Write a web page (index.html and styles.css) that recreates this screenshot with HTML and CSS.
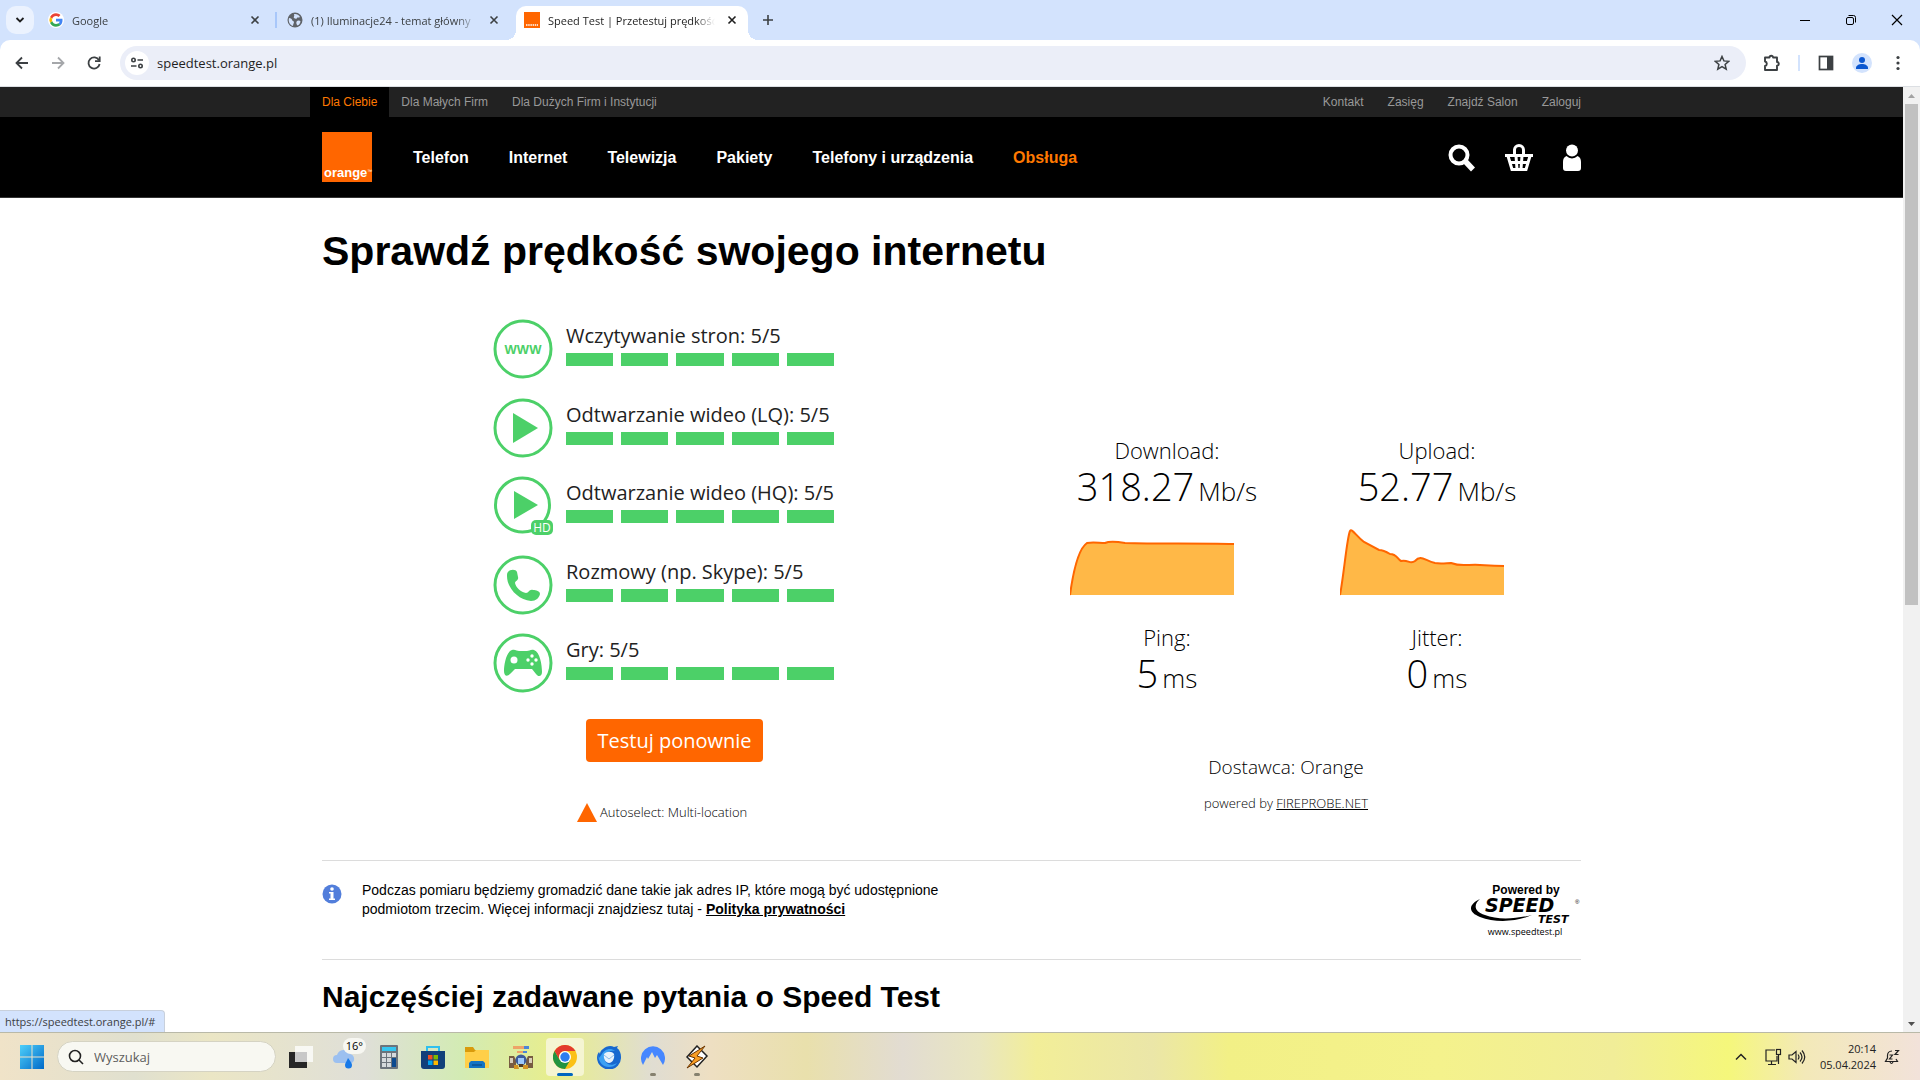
FILE: index.html
```html
<!DOCTYPE html>
<html lang="pl">
<head>
<meta charset="utf-8">
<title>Speed Test | Przetestuj prędkość</title>
<link rel="stylesheet" href="styles.css">
</head>
<body>
<header class="browser">
  <div class="tabstrip">
    <button class="tab-search" aria-label="Szukaj kart"><svg width="10" height="10" viewBox="0 0 10 10"><path d="M1.500 3l3.500 3.500L8.500 3" fill="none" stroke="#1f1f1f" stroke-width="1.800"/></svg></button>
    <div class="tab">
      <svg width="16" height="16" viewBox="0 0 48 48"><circle cx="24" cy="24" r="24" fill="#fff"/><path fill="#EA4335" d="M24 12c3 0 5.600 1 7.700 3l5.700-5.700C33.900 6.100 29.300 4 24 4 16.200 4 9.400 8.500 6.200 15l6.600 5.100C14.400 15.400 18.800 12 24 12z"/><path fill="#4285F4" d="M43.500 24.500c0-1.600-.1-3.100-.4-4.500H24v8.500h11c-.5 2.500-1.900 4.700-4 6.200l6.500 5c3.800-3.600 6-8.800 6-15.200z"/><path fill="#FBBC05" d="M12.800 28A12 12 0 0 1 12.800 20.100L6.200 15a20 20 0 0 0 0 18z"/><path fill="#34A853" d="M24 44c5.400 0 10-1.800 13.400-4.900l-6.500-5c-1.800 1.200-4.100 2-6.900 2-5.200 0-9.600-3.500-11.200-8.200L6.200 33C9.400 39.500 16.200 44 24 44z"/></svg>
      <span class="tab-title">Google</span>
      <button class="tab-close" aria-label="Zamknij"><svg width="10" height="10" viewBox="0 0 10 10"><path d="M1.500 1.500l7 7m0-7l-7 7" stroke="#3c4043" stroke-width="1.600"/></svg></button>
    </div>
    <div class="tab tab-divided">
      <svg width="16" height="16" viewBox="0 0 16 16"><circle cx="8" cy="8" r="7.500" fill="#5f6368"/><path d="M2 6c2 0 3 1 3 2s2 1 2 2-1 2-1 4c-3-1-5-4-4-8zM7 2c2-.5 5 .5 6 3-1 1-3 0-3 1s-2 1-3 0 1-2 0-4zM10 9c1-1 3-.5 3.500.5C13 12 12 13 10.500 13.500 9 12 9 10 10 9z" fill="#d3e3fd"/></svg>
      <span class="tab-title">(1) Iluminacje24 - temat główny</span>
      <button class="tab-close" aria-label="Zamknij"><svg width="10" height="10" viewBox="0 0 10 10"><path d="M1.500 1.500l7 7m0-7l-7 7" stroke="#3c4043" stroke-width="1.600"/></svg></button>
    </div>
    <div class="tab tab-active">
      <svg width="16" height="16" viewBox="0 0 16 16"><path fill="#f60" d="M0 0h16v16H0z"/><path d="M2 13h12" stroke="#fff" stroke-width="1.500" stroke-dasharray="1.500 .7"/></svg>
      <span class="tab-title">Speed Test | Przetestuj prędkość</span>
      <button class="tab-close" aria-label="Zamknij"><svg width="10" height="10" viewBox="0 0 10 10"><path d="M1.500 1.500l7 7m0-7l-7 7" stroke="#1f1f1f" stroke-width="1.600"/></svg></button>
    </div>
    <button class="new-tab" aria-label="Nowa karta"><svg width="12" height="12" viewBox="0 0 12 12"><path d="M6 1v10M1 6h10" stroke="#3c4043" stroke-width="1.600"/></svg></button>
    <div class="window-buttons">
      <button aria-label="Minimalizuj"><svg width="12" height="12" viewBox="0 0 12 12"><path d="M1 6.500h10" stroke="#000"/></svg></button>
      <button aria-label="Przywróć"><svg width="12" height="12" viewBox="0 0 12 12" fill="none" stroke="#000"><rect x="1.500" y="3.500" width="7" height="7" rx="1.500"/><path d="M3.500 1.500h5a2 2 0 0 1 2 2v5"/></svg></button>
      <button aria-label="Zamknij okno"><svg width="12" height="12" viewBox="0 0 12 12"><path d="M1 1l10 10M11 1L1 11" stroke="#000" stroke-width="1.200"/></svg></button>
    </div>
  </div>
  <div class="toolbar">
    <button aria-label="Wstecz"><svg width="16" height="16" viewBox="0 0 16 16" fill="none" stroke="#3c4043" stroke-width="1.800"><path d="M14 8H3M8 2.500L2.500 8 8 13.500"/></svg></button>
    <button aria-label="Dalej"><svg width="16" height="16" viewBox="0 0 16 16" fill="none" stroke="#a5a7aa" stroke-width="1.800"><path d="M2 8h11M8 2.500L13.500 8 8 13.500"/></svg></button>
    <button aria-label="Odśwież"><svg width="16" height="16" viewBox="0 0 16 16" fill="none" stroke="#3c4043" stroke-width="1.800"><path d="M13 5.200A5.600 5.600 0 1 0 13.600 9"/><path d="M13.700 1.500v4.700H9"/></svg></button>
    <div class="omnibox">
      <span class="site-info"><svg width="14" height="14" viewBox="0 0 14 14" fill="none" stroke="#3c4043" stroke-width="1.600"><circle cx="3.500" cy="4" r="1.700"/><path d="M7.500 4H13M1 10h5.500"/><circle cx="10.500" cy="10" r="1.700"/></svg></span>
      <input class="address" type="text" value="speedtest.orange.pl" aria-label="Adres">
      <svg width="16" height="16" viewBox="0 0 16 16"><path d="M8 1.500l1.900 4.400 4.800.4-3.600 3.200 1.100 4.700L8 11.700l-4.200 2.500 1.100-4.700L1.300 6.300l4.800-.4z" fill="none" stroke="#3c4043" stroke-width="1.500"/></svg>
    </div>
    <div class="toolbar-end">
      <button aria-label="Rozszerzenia"><svg width="18" height="18" viewBox="0 0 18 18"><path d="M3 3.500h4.500a1.800 1.800 0 0 1 3.600 0H15V8a1.800 1.800 0 0 1 0 3.600V16H3v-4a2.300 2.300 0 0 0 0-4.500z" fill="none" stroke="#3c4043" stroke-width="1.900" stroke-linejoin="round"/></svg></button>
      <span class="toolbar-rule"></span>
      <button aria-label="Panel boczny"><svg width="16" height="16" viewBox="0 0 16 16"><rect x="1.500" y="1.500" width="13" height="13" fill="none" stroke="#3c4043" stroke-width="1.700"/><path d="M9 1h6v14H9z" fill="#3c4043"/></svg></button>
      <button aria-label="Profil"><svg width="20" height="20" viewBox="0 0 20 20"><circle cx="10" cy="10" r="10" fill="#d3e3fd"/><circle cx="10" cy="7" r="3" fill="#0b57d0"/><path d="M4 16v-1c0-2.500 3-4 6-4s6 1.500 6 4v1z" fill="#0b57d0"/></svg></button>
      <button class="menu" aria-label="Menu"><svg width="4" height="16" viewBox="0 0 4 16" fill="#3c4043"><circle cx="2" cy="2.500" r="1.600"/><circle cx="2" cy="8" r="1.600"/><circle cx="2" cy="13.500" r="1.600"/></svg></button>
    </div>
  </div>
</header>

<div class="viewport">
  <div class="page">
    <div class="topbar">
      <div class="container topbar-inner">
        <nav class="segments"><a class="current" href="#">Dla Ciebie</a><a href="#">Dla Małych Firm</a><a href="#">Dla Dużych Firm i Instytucji</a></nav>
        <nav class="service"><a href="#">Kontakt</a><a href="#">Zasięg</a><a href="#">Znajdź Salon</a><a href="#">Zaloguj</a></nav>
      </div>
    </div>
    <div class="masthead">
      <div class="container masthead-inner">
        <a class="logo" href="#">orange<sup>™</sup></a>
        <nav class="main-nav"><a href="#">Telefon</a><a href="#">Internet</a><a href="#">Telewizja</a><a href="#">Pakiety</a><a href="#">Telefony i urządzenia</a><a class="current" href="#">Obsługa</a></nav>
        <div class="tools">
          <a href="#" aria-label="Szukaj"><svg width="28" height="28" viewBox="0 0 28 28" fill="none" stroke="#fff"><circle cx="12" cy="11" r="8.500" stroke-width="4"/><path d="M18 17l8 8.500" stroke-width="5.500"/></svg></a>
          <a href="#" aria-label="Koszyk"><svg width="30" height="28" viewBox="0 0 30 28"><path fill="none" stroke="#fff" stroke-width="3" d="M10.500 12V6a4.500 4.500 0 0 1 9 0v6M1 11.500h28M4 12l4 13.500h14L26 12M6 18.500h18M12 12l1 13M18 12l-1 13"/></svg></a>
          <a href="#" aria-label="Konto"><svg width="18" height="28" viewBox="0 0 18 28" fill="#fff"><circle cx="9" cy="6.500" r="6"/><path d="M3.500 12a7.500 7.500 0 0 0 11 0c2.500 1 3.500 3 3.500 6v6c0 2-1 3-3 3H3c-2 0-3-1-3-3v-6c0-3 1-5 3.500-6z"/></svg></a>
        </div>
      </div>
    </div>

    <main class="container">
      <h1>Sprawdź prędkość swojego internetu</h1>
      <div class="results">
        <section class="quality">
          <ul class="scores">
            <li>
              <svg width="60" height="60" viewBox="0 0 60 60"><circle cx="30" cy="30" r="28" fill="none" stroke="#4cd068" stroke-width="3"/><text class="www" x="30" y="35" text-anchor="middle">WWW</text></svg>
              <div class="score"><span>Wczytywanie stron: 5/5</span><div class="bars"><i></i><i></i><i></i><i></i><i></i></div></div>
            </li>
            <li>
              <svg width="60" height="60" viewBox="0 0 60 60"><circle cx="30" cy="30" r="28" fill="none" stroke="#4cd068" stroke-width="3"/><path d="M20 15v30l25-15z" fill="#4cd068"/></svg>
              <div class="score"><span>Odtwarzanie wideo (LQ): 5/5</span><div class="bars"><i></i><i></i><i></i><i></i><i></i></div></div>
            </li>
            <li>
              <svg width="60" height="60" viewBox="0 0 60 60"><circle cx="29.500" cy="29" r="27" fill="none" stroke="#4cd068" stroke-width="3"/><path d="M21 15v28l24-14z" fill="#4cd068"/><rect x="38" y="44" width="22" height="15" rx="5" fill="#4cd068"/><text class="hd" x="49" y="56" text-anchor="middle">HD</text></svg>
              <div class="score"><span>Odtwarzanie wideo (HQ): 5/5</span><div class="bars"><i></i><i></i><i></i><i></i><i></i></div></div>
            </li>
            <li>
              <svg width="60" height="60" viewBox="0 0 60 60"><circle cx="30" cy="30" r="28" fill="none" stroke="#4cd068" stroke-width="3"/><path d="M15 17c2-3 8-3 9 0l1 5c1 3-3 4-3 6 1 5 6 9 11 10 3 0 3-4 7-3 3 0 7 1 7 4-1 4-4 7-9 7-13-1-24-13-24-25 0-2 0-3 1-4z" fill="#4cd068"/></svg>
              <div class="score"><span>Rozmowy (np. Skype): 5/5</span><div class="bars"><i></i><i></i><i></i><i></i><i></i></div></div>
            </li>
            <li>
              <svg width="60" height="60" viewBox="0 0 60 60"><circle cx="30" cy="30" r="28" fill="none" stroke="#4cd068" stroke-width="3"/><path d="M19 17c3-1 5 1 7 1h8c2 0 4-2 7-1 6 2 8 15 8 22 0 5-4 5-6 2l-4-5H22l-5 5c-3 3-6 2-6-3 0-6 2-19 8-21z" fill="#4cd068"/><g fill="#fff"><circle cx="21" cy="27" r="3.500"/><circle cx="39" cy="23" r="1.700"/><circle cx="39" cy="31" r="1.700"/><circle cx="35" cy="27" r="1.700"/><circle cx="43" cy="27" r="1.700"/></g></svg>
              <div class="score"><span>Gry: 5/5</span><div class="bars"><i></i><i></i><i></i><i></i><i></i></div></div>
            </li>
          </ul>
          <button class="retest">Testuj ponownie</button>
          <div class="server"><svg width="20" height="19" viewBox="0 0 20 19"><path d="M10 0l10 19H0z" fill="#f60"/></svg>Autoselect: Multi-location</div>
        </section>
        <section class="speeds">
          <div class="metrics">
            <div class="metric"><span class="label">Download:</span><span class="value">318.27<small>Mb/s</small></span>
              <svg width="164" height="68" viewBox="0 0 164 68"><path d="M0 67C3 45 8 21 17 15c6-1 12 0 18 0 4-2 9-2 20 0 35 1 70 0 109 1v51H0z" fill="#ffb847"/><path d="M0 67C3 45 8 21 17 15c6-1 12 0 18 0 4-2 9-2 20 0 35 1 70 0 109 1" fill="none" stroke="#f60" stroke-width="2"/></svg></div>
            <div class="metric"><span class="label">Upload:</span><span class="value">52.77<small>Mb/s</small></span>
              <svg width="164" height="68" viewBox="0 0 164 68"><path d="M0 67C4 46 7 9 10 3c2-3 6 5 14 11l15 8c4 0 6 1 11 4 7 0 7 5 11 7 7-2 9 4 14 0 6-7 10 0 20 2 6 1 12 0 16 0 8 3 12 2 18 2 13-1 15 1 35 1v29H0z" fill="#ffb847"/><path d="M0 67C4 46 7 9 10 3c2-3 6 5 14 11l15 8c4 0 6 1 11 4 7 0 7 5 11 7 7-2 9 4 14 0 6-7 10 0 20 2 6 1 12 0 16 0 8 3 12 2 18 2 13-1 15 1 35 1" fill="none" stroke="#f60" stroke-width="2"/></svg></div>
            <div class="metric"><span class="label">Ping:</span><span class="value">5<small>ms</small></span></div>
            <div class="metric"><span class="label">Jitter:</span><span class="value">0<small>ms</small></span></div>
          </div>
          <p class="provider">Dostawca: Orange</p>
          <p class="powered">powered by <a href="#">FIREPROBE.NET</a></p>
        </section>
      </div>

      <section class="notice">
        <svg class="info" width="20" height="20" viewBox="0 0 20 20"><circle cx="10" cy="10" r="9.500" fill="#527edb"/><circle cx="10" cy="5" r="1.800" fill="#fff"/><path d="M7 8h4.500v6.500H13V16H7v-1.500h1.500v-5H7z" fill="#fff"/></svg>
        <p>Podczas pomiaru będziemy gromadzić dane takie jak adres IP, które mogą być udostępnione<br>podmiotom trzecim. Więcej informacji znajdziesz tutaj - <a href="#">Polityka prywatności</a></p>
        <svg class="speedtest" width="110" height="54" viewBox="0 0 110 54"><text class="st-by" x="55" y="9" text-anchor="middle">Powered by</text><path d="M9 14C-2 19-4 27 9 32c15 6 37 5 52-2-16 4-35 5-47 0C2 26 3 19 9 14z"/><text class="st-speed" x="14" y="27">SPEED</text><text class="st-test" x="67" y="38">TEST</text><text class="st-r" x="104" y="19">®</text><text class="st-url" x="54" y="50" text-anchor="middle">www.speedtest.pl</text></svg>
      </section>
      <h2>Najczęściej zadawane pytania o Speed Test</h2>
    </main>
  </div>
  <div class="scrollbar">
    <svg width="17" height="17" viewBox="0 0 17 17"><path d="M5 11h7L8.500 7z" fill="#a3a3a3"/></svg>
    <div class="track"><div class="thumb"></div></div>
    <svg width="17" height="17" viewBox="0 0 17 17"><path d="M5 7h7l-3.500 4z" fill="#505050"/></svg>
  </div>
  <div class="status">https://speedtest.orange.pl/#</div>
</div>

<footer class="taskbar">
  <button class="start" aria-label="Start"><svg width="24" height="24" viewBox="0 0 24 24"><defs><linearGradient id="win" x2="1" y2="1"><stop stop-color="#4fd0fa"/><stop offset="1" stop-color="#0069c8"/></linearGradient></defs><path fill="url(#win)" d="M0 0h11.500v11.500H0zM12.500 0H24v11.500H12.500zM0 12.500h11.500V24H0zM12.500 12.500H24V24H12.500z"/></svg></button>
  <label class="search"><svg width="16" height="16" viewBox="0 0 16 16" fill="none" stroke="#222" stroke-width="1.600"><circle cx="7" cy="7" r="5.500"/><path d="M11 11l4 4"/></svg><input type="text" placeholder="Wyszukaj" aria-label="Wyszukaj"></label>
  <div class="apps">
    <button aria-label="Widok zadań"><svg width="24" height="24" viewBox="0 0 24 24"><path d="M0 7h18v16H0z" fill="#262626"/><path d="M6 1h18v16H6z" fill="#fff" opacity=".75"/></svg></button>
    <button aria-label="Pogoda"><svg width="26" height="24" viewBox="0 0 26 24"><path d="M5 18a4 4 0 0 1 0-8 7 7 0 0 1 13-1 5 5 0 0 1 2 9z" fill="#9cc0f0"/><path d="M16 13c2 3 4 5 4 7a3.500 3.500 0 0 1-7 0c0-2 2-4 3-7z" fill="#1779e8"/></svg><span class="badge">16°</span></button>
    <button aria-label="Kalkulator"><svg width="18" height="24" viewBox="0 0 18 24"><rect width="18" height="24" rx="1" fill="#6b747c"/><path d="M2 2h14v4H2z" fill="#35c6f0"/><path d="M2 8h4v4H2zM7 8h4v4H7zM12 8h4v4h-4zM2 13h4v4H2zM7 13h4v4H7zM2 18h4v4H2zM7 18h4v4H7z" fill="#d5dadd"/><path d="M12 13h4v9h-4z" fill="#0b4a8f"/></svg></button>
    <button aria-label="Sklep"><svg width="24" height="24" viewBox="0 0 24 24"><path d="M6 7V2h12v5" fill="none" stroke="#2fc0ee" stroke-width="2"/><path d="M0 6h24v15a3 3 0 0 1-3 3H3a3 3 0 0 1-3-3z" fill="#11407a"/><path d="M7 10h4.500v4.500H7z" fill="#f25022"/><path d="M12.500 10H17v4.500h-4.500z" fill="#7fba00"/><path d="M7 15.500h4.500V20H7z" fill="#00a4ef"/><path d="M12.500 15.500H17V20h-4.500z" fill="#ffb900"/></svg></button>
    <button aria-label="Eksplorator plików"><svg width="24" height="24" viewBox="0 0 24 24"><path d="M0 2h8l2 3h13v6H0z" fill="#d99b0c"/><path d="M0 7h9l2-2h13v18H0z" fill="#ffcf48"/><path d="M4 23v-5l2-2h12l2 2v5z" fill="#1474c4"/><path d="M7 19h10v2H7z" fill="#0d5a9e"/></svg></button>
    <button aria-label="Gra"><svg width="24" height="24" viewBox="0 0 24 24"><path d="M4 1h11v3H4zM8 6h6v2H8z" fill="#eea468"/><path d="M15 1h5v3h-5zM14 6h4v2h-4z" fill="#4a86d8"/><path d="M0 11h5l2 4v8H0zM24 11h-5l-2 4v8h7z" fill="#775c42"/><path d="M1 13h3v5H1zM20 13h3v5h-3z" fill="#d8cfb9"/><circle cx="12" cy="15" r="5.500" fill="#3c5b9c"/><path d="M9 13h6v6H9z" fill="#9cc9fa"/><path d="M5 20h4l1 4H5zM14 20h5v4h-5z" fill="#d39322"/><path d="M10 19h4v3h-4z" fill="#523a25"/></svg></button>
    <button class="app-active" aria-label="Chrome"><svg width="24" height="24" viewBox="0 0 24 24"><circle cx="12" cy="12" r="12" fill="#fbc116"/><path d="M1.600 6A12 12 0 0 0 12 24l5.200-9H6.800z" fill="#229342"/><path d="M1.600 6A12 12 0 0 1 22.400 6H12a6 6 0 0 0-5.200 9z" fill="#e33b2e"/><circle cx="12" cy="12" r="6" fill="#fff"/><circle cx="12" cy="12" r="4.700" fill="#2d7df0"/></svg></button>
    <button aria-label="Thunderbird"><svg width="24" height="24" viewBox="0 0 24 24"><path d="M6 4c3-3 8-4 11-2l4-1-1 2c3 2 4 6 4 9a12 12 0 0 1-24 1c0-3 1-5 2-6l1 2c0-2 1-4 3-5z" fill="#1768cf"/><path d="M1 10c1 8 5 12 11 12 3 0 6-1 8-4-5 3-10 2-12-2-1-3-1-5 1-7 2-3 6-4 9-3-5-4-11-1-13 3l-3 4z" fill="#3ba1f3"/><path d="M7 9c3-3 8-3 10 0 1 5-2 9-5 9s-6-4-5-9z" fill="#e7f2fb"/><path d="M7 10l5 4 5-4" fill="none" stroke="#8dbce9"/></svg></button>
    <button class="app-running" aria-label="NordVPN"><svg width="24" height="24" viewBox="0 0 24 24"><path d="M2 20A12 12 0 1 1 22 20l-6-10-2 3-3-6-4 7-1-2z" fill="#4687ff"/></svg></button>
    <button class="app-running" aria-label="Winamp"><svg width="24" height="24" viewBox="0 0 24 24"><path d="M12 1l10 10-10 11L2 12z" fill="#fff" stroke="#222" stroke-width="1.500"/><path d="M20 1L4 11l6 2-8 10 16-10-6-2z" fill="#f99d23" stroke="#6b3500"/></svg></button>
  </div>
  <div class="tray">
    <svg width="12" height="8" viewBox="0 0 12 8"><path d="M1 6.500l5-5 5 5" fill="none" stroke="#222" stroke-width="1.500"/></svg>
    <div class="tray-pair"><svg width="18" height="18" viewBox="0 0 18 18" fill="none" stroke="#222" stroke-width="1.200"><path d="M11 2H2v11h11V8M7.500 13v3M4 16.500h8"/><rect x="12.500" y="1.500" width="4" height="5"/><path d="M14.500 6.500V16"/></svg>
    <svg width="18" height="16" viewBox="0 0 18 16" fill="none" stroke="#222" stroke-width="1.200"><path d="M1 6v4h3l4 3.500v-11L4 6zM10 5.500q2 2.500 0 5M12 3.500q4 4.500 0 9M14 1.500q5.500 6.500 0 13"/></svg></div>
    <div class="clock"><time>20:14</time><time>05.04.2024</time></div>
    <svg width="16" height="16" viewBox="0 0 16 16" fill="none" stroke="#222" stroke-width="1.200"><path d="M8 2C5 2 3.500 4 3.500 6.500V9L1.500 12.500h12L12 10M6 13q1.500 3 3 0M5.500 6h3l-3 4h3M11 1.500h3.500L11 5.500h3.500"/></svg>
  </div>
</footer>
</body>
</html>
```
FILE: styles.css
```css
* { box-sizing: border-box; }

body {
  margin: 0;
  height: 100vh;
  display: flex;
  flex-direction: column;
  overflow: hidden;
  background: #fff;
  color: #000;
  font-family: "Liberation Sans", Arial, sans-serif;
}

svg { display: block; flex: none; }
a { color: inherit; text-decoration: none; }
button {
  display: flex;
  align-items: center;
  justify-content: center;
  padding: 0;
  border: 0;
  background: none;
  font: inherit;
}
input {
  min-width: 0;
  padding: 0;
  border: 0;
  outline: 0;
  background: none;
  font: inherit;
  color: inherit;
}

/* Browser chrome */
.browser {
  flex: none;
  background: #d3e3fd;
  border-bottom: 1px solid #dcdfe3;
  font-family: "Open Sans", "Noto Sans", sans-serif;
  font-size: 11px;
  color: #3c4043;
}
.tabstrip { display: flex; height: 40px; padding: 6px 0 0 6px; }
.tab-search { width: 28px; height: 28px; border-radius: 10px; background: #ebf2fe; }
.tab {
  position: relative;
  display: flex;
  align-items: center;
  gap: 8px;
  width: 237px;
  height: 28px;
  margin-left: 4px;
  padding: 0 11px 0 10px;
}
.tab-title {
  flex: 1;
  overflow: hidden;
  white-space: nowrap;
  mask-image: linear-gradient(90deg, #000 88%, transparent);
}
.tab-close { width: 18px; height: 18px; }
.tab-divided { width: 229px; height: 16px; margin: 6px 0 0; padding-right: 1px; border-left: 2px solid #a8c7fa; }
.tab-active {
  width: 232px;
  height: 34px;
  margin-left: 12px;
  padding: 0 7px 6px 8px;
  border-radius: 10px 10px 0 0;
  background: #fff;
  color: #1f1f1f;
}
.tab-active::before, .tab-active::after {
  content: "";
  position: absolute;
  bottom: 0;
  width: 10px;
  height: 10px;
}
.tab-active::before { right: 100%; background: radial-gradient(circle at 0 0, transparent 10px, #fff 10px); }
.tab-active::after { left: 100%; background: radial-gradient(circle at 100% 0, transparent 10px, #fff 10px); }
.new-tab { width: 28px; height: 28px; margin-left: 6px; }
.window-buttons { display: flex; margin-left: auto; }
.window-buttons button { width: 46px; height: 28px; }

.toolbar {
  display: flex;
  align-items: center;
  height: 46px;
  padding: 0 20px 0 4px;
  border-radius: 10px 10px 0 0;
  background: #fff;
}
.toolbar > button { width: 36px; height: 34px; }
.omnibox {
  flex: 1;
  display: flex;
  align-items: center;
  gap: 8px;
  height: 34px;
  margin-left: 8px;
  padding: 0 16px 0 5px;
  border-radius: 17px;
  background: #ebeef8;
  color: #1f1f1f;
  font-size: 13px;
}
.site-info { display: flex; align-items: center; justify-content: center; width: 24px; height: 24px; border-radius: 50%; background: #fff; }
.address { flex: 1; }
.toolbar-end { display: flex; align-items: center; gap: 18px; margin-left: 16px; }
.toolbar-rule { width: 2px; height: 16px; background: #d3e3fd; }
.menu { margin-left: 6px; }

/* Page viewport */
.viewport { position: relative; flex: 1; min-height: 0; display: flex; overflow: hidden; }
.page { flex: 1; min-width: 0; overflow: hidden; }
.scrollbar { display: flex; flex-direction: column; width: 17px; background: #f1f1f1; }
.track { flex: 1; padding: 0 2px; }
.thumb { height: 55%; background: #c1c1c1; }
.status {
  position: absolute;
  left: 0;
  bottom: 0;
  padding: 0 9px 0 5px;
  border-top: 1px solid #c8d0dc;
  border-right: 1px solid #c8d0dc;
  border-radius: 0 4px 0 0;
  background: #d3e3fd;
  color: #3c4043;
  font: 11px/21px "Open Sans", "Noto Sans", sans-serif;
}

.container { max-width: 1259px; margin: 0 auto; }
.topbar { background: #222; color: #999; font-size: 12px; line-height: 30px; }
.topbar-inner { display: flex; justify-content: space-between; }
.segments { display: flex; margin-left: -12px; }
.segments a { padding: 0 12px; }
.segments .current { background: #000; color: #ff7900; }
.service { display: flex; gap: 24px; }

.masthead { background: #000; color: #fff; border-bottom: 1px solid #333; }
.masthead-inner { display: flex; align-items: center; height: 80px; }
.logo {
  display: flex;
  align-items: flex-end;
  width: 50px;
  height: 50px;
  padding-left: 2px;
  background: #f60;
  color: #fff;
  font-size: 13px;
  font-weight: 700;
  line-height: 18px;
}
.logo sup { font-size: 5px; line-height: 22px; font-weight: 400; }
.main-nav { display: flex; gap: 40px; margin-left: 41px; padding-top: 2px; font-size: 16px; font-weight: 700; }
.main-nav .current { color: #ff7900; }
.tools { display: flex; gap: 29px; margin-left: auto; padding-top: 2px; }

h1 { margin: 27px 0 0; font-size: 41px; line-height: 52px; }
h2 { margin: 0; padding-top: 20px; font-size: 30px; line-height: 34px; }

/* Results */
.results {
  display: grid;
  grid-template-columns: 710px 1fr;
  padding-bottom: 38px;
  border-bottom: 1px solid #dcdcdc;
  font-family: "Open Sans", "Noto Sans", sans-serif;
  font-weight: 300;
}
.quality { display: flex; flex-direction: column; padding: 42px 0 0 171px; }
.scores { display: grid; grid-auto-rows: 1fr; min-height: 393px; margin: 0; padding: 0; list-style: none; }
.scores li { display: flex; gap: 13px; }
.score { width: 268px; color: #222; font-size: 20px; font-weight: 400; line-height: 34px; white-space: nowrap; }
.bars { display: grid; grid-template-columns: repeat(5, 1fr); gap: 8px; }
.bars i { height: 13px; background: #4cd068; }
.www { font: 700 13px "Liberation Sans", sans-serif; fill: #4cd068; }
.hd { font: 12px "Open Sans", sans-serif; fill: #fff; }
.retest {
  width: 177px;
  height: 43px;
  margin: 7px 0 0 93px;
  border-radius: 4px;
  background: #f60;
  color: #fff;
  font-size: 20px;
  font-weight: 400;
}
.server { display: flex; align-items: center; gap: 3px; margin: 41px 0 0 84px; font-size: 13px; line-height: 19px; }

.speeds { display: flex; flex-direction: column; padding-top: 158px; }
.metrics { display: grid; grid-template-columns: 270px 270px; row-gap: 26px; }
.metric { display: flex; flex-direction: column; align-items: center; }
.metric svg { align-self: flex-start; margin: 16px 0 0 38px; }
.label { font-size: 22px; line-height: 30px; }
.value { display: flex; align-items: baseline; gap: 4px; font-size: 38px; line-height: 42px; }
.value small { font-size: 26px; }
.provider { width: 508px; margin: 55px 0 0; text-align: center; font-size: 19px; line-height: 26px; }
.powered { width: 508px; margin: 14px 0 0; text-align: center; font-size: 13px; line-height: 18px; }
.powered a, .notice a { text-decoration: underline; }

.notice { display: flex; min-height: 99px; padding-top: 20px; border-bottom: 1px solid #dcdcdc; }
.notice p { margin: 0 0 0 20px; font-size: 14px; line-height: 19px; }
.notice a { font-weight: 700; }
.info { margin-top: 3px; }
.speedtest { margin-left: auto; margin-top: 4px; }
.st-by { font: 700 12px "Liberation Sans", sans-serif; }
.st-speed { font: italic 700 19px "DejaVu Sans", sans-serif; }
.st-test { font: italic 700 11px "DejaVu Sans", sans-serif; }
.st-r { font: 6px "Liberation Sans", sans-serif; }
.st-url { font: 9px "Open Sans", sans-serif; }

/* Taskbar */
.taskbar {
  flex: none;
  display: flex;
  align-items: center;
  height: 48px;
  padding: 0 20px 0 9px;
  border-top: 1px solid #b9b9a8;
  background: linear-gradient(90deg, #f0e3c8, #e0e0cf 7%, #ebe6c5 11%, #dfdfd8 19%, #d3ebb4 24%, #e8ee8c 29%, #e0ddd2 34%, #eedfc2 37%, #e9e0ac 42%, #e2dcd2 47%, #e9e6c0 51%, #f2ee98 54%, #ebe6a8 60%, #f2f086 64%, #f4f28c 75%, #f1ed98 84%, #f5f77b 90%, #f3e9b8 94%, #f2e2da);
  color: #222;
  font: 12px/16px "Open Sans", "Noto Sans", sans-serif;
}
.start { width: 46px; height: 40px; }
.search {
  display: flex;
  align-items: center;
  gap: 10px;
  width: 219px;
  height: 31px;
  margin-left: 2px;
  padding: 0 10px;
  border: 1px solid #d5d3c3;
  border-radius: 16px;
  background: #f8f8f2;
  font-size: 13px;
}
.search input::placeholder { color: #5d5d5d; opacity: 1; }
.apps { display: flex; margin-left: 3px; }
.apps button { position: relative; width: 38px; height: 38px; margin: 0 3px; border-radius: 4px; }
.badge { position: absolute; top: 0; right: -2px; padding: 0 3px; border-radius: 8px; background: #f7f7f2; font-size: 11px; line-height: 16px; }
.app-active { background: #f5f5d2; }
.app-active::after, .app-running::after {
  content: "";
  position: absolute;
  bottom: 0;
  left: 50%;
  width: 6px;
  height: 3px;
  margin-left: -3px;
  border-radius: 2px;
  background: #85816f;
}
.app-active::after { width: 16px; margin-left: -8px; background: #0067c0; }
.tray { display: flex; align-items: center; gap: 14px; margin-left: auto; }
.tray-pair { display: flex; align-items: center; gap: 6px; margin-left: 3px; }
.clock { display: flex; flex-direction: column; align-items: flex-end; margin-right: -6px; font-size: 11px; }
```
